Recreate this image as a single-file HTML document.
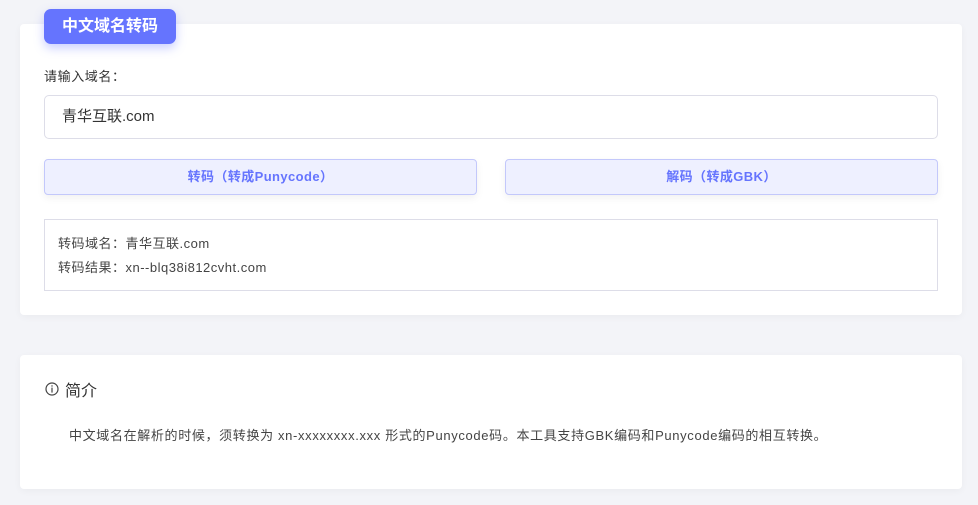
<!DOCTYPE html>
<html><head><meta charset="utf-8"><style>
*{box-sizing:border-box;margin:0;padding:0}
body{width:978px;height:505px;background:#f3f4f8;font-family:"Liberation Sans","Noto Sans CJK SC",sans-serif;color:#444;position:relative;overflow:hidden}
.card{position:absolute;left:20px;width:942px;background:#fff;border-radius:4px;box-shadow:0 2px 8px rgba(0,0,0,0.04)}
.tag{position:absolute;left:44px;top:9px;width:132px;height:35px;background:#6574fe;color:#fff;border-radius:7px;font-size:16px;font-weight:bold;text-align:center;line-height:35px;box-shadow:0 4px 10px rgba(101,116,254,0.35)}
.lbl{position:absolute;left:44px;top:66px;font-size:13px;color:#333;letter-spacing:0.6px}
.inp{position:absolute;left:44px;top:95px;width:894px;height:44px;border:1px solid #dddde8;border-radius:5px;font-size:15px;padding-left:17px;line-height:42px;color:#333}
.btn{position:absolute;top:159px;height:36px;width:433px;background:#eef0ff;border:1px solid #c3c8fb;border-radius:4px;color:#6574fe;font-size:13px;font-weight:bold;text-align:center;line-height:34px;box-shadow:0 3px 8px rgba(0,0,0,0.06);letter-spacing:0.4px}
.res{position:absolute;left:44px;top:219px;width:894px;height:72px;border:1px solid #dddde8;font-size:13px;color:#444;padding:12px 0 0 13px;line-height:24px;letter-spacing:0.5px}
.h{position:absolute;left:45px;top:377px;font-size:16px;color:#333;display:flex;align-items:center;gap:6px}
.p{position:absolute;left:69px;top:425px;font-size:13px;color:#444;letter-spacing:0.65px}
</style></head><body>
<div class="card" style="top:24px;height:291px"></div>
<div class="card" style="top:355px;height:134px"></div>
<div class="tag">中文域名转码</div>
<div class="lbl">请输入域名：</div>
<div class="inp">青华互联.com</div>
<div class="btn" style="left:44px">转码（转成Punycode）</div>
<div class="btn" style="left:505px">解码（转成GBK）</div>
<div class="res">转码域名：青华互联.com<br>转码结果：xn--blq38i812cvht.com</div>
<div class="h"><svg width="14" height="14" viewBox="0 0 14 14"><circle cx="7" cy="7" r="6" fill="none" stroke="#444" stroke-width="1.2"/><rect x="6.4" y="3.3" width="1.2" height="1.3" fill="#444"/><rect x="6.4" y="5.6" width="1.2" height="5" fill="#444"/></svg>简介</div>
<div class="p">中文域名在解析的时候，须转换为 xn-xxxxxxxx.xxx 形式的Punycode码。本工具支持GBK编码和Punycode编码的相互转换。</div>
</body></html>
